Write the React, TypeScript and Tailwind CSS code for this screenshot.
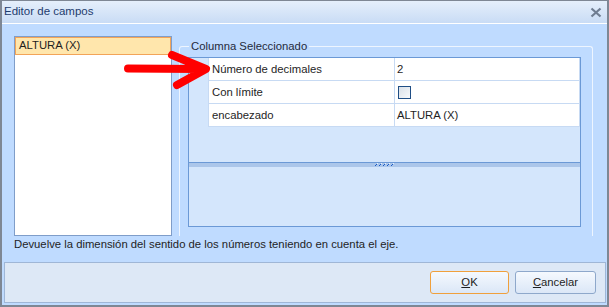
import React from "react";

const rows = [
  { name: "Número de decimales", value: "2" },
  { name: "Con límite", value: null },
  { name: "encabezado", value: "ALTURA (X)" },
];

const Button = ({ label, hot, focused }: { label: string; hot: number; focused?: boolean }) => (
  <button
    className={
      "flex h-[23px] items-center justify-center rounded-[3px] border bg-gradient-to-b from-[#f5f9fe] to-[#dbe7f7] text-[11.3px] text-[#1e1e1e] " +
      (focused ? "w-[79px] border-[#f0a03c]" : "w-[81px] border-[#8ea8cb]")
    }
  >
    {label.slice(0, hot)}
    <span className="underline">{label[hot]}</span>
    {label.slice(hot + 1)}
  </button>
);

export default function App() {
  return (
    <div className="relative flex h-[307px] w-[609px] flex-col border-x-2 border-t border-b-2 border-[#7e8794] bg-[#bfdbff] font-['Liberation_Sans',sans-serif] text-[11.3px] text-[#1e1e1e]">
      {/* title bar */}
      <div className="flex h-[23px] items-center justify-between border-b border-white bg-gradient-to-b from-[#e5effb] to-[#c9dcf5] pl-[2px] pr-[5px]">
        <span className="text-[11.5px] text-[#1e3c6e]">Editor de campos</span>
        <svg width="12" height="11" viewBox="0 0 12 11">
          <path d="M1.5 1.5 L10.5 9.5 M10.5 1.5 L1.5 9.5" stroke="#6f7d91" strokeWidth="2.2" />
        </svg>
      </div>

      {/* main row */}
      <div className="flex h-[212px] pl-[12px] pt-[12px]">
        <div className="h-[200px] w-[158px] border border-[#7f9dc9] bg-white">
          <div className="flex h-[18px] items-center border border-[#f2a458] bg-[#ffe6ac] pl-[3px] leading-none">
            ALTURA (X)
          </div>
        </div>

        <div className="relative ml-[7px] mt-[10px] h-[190px] w-[414px] rounded-t-[3px] border-x border-t border-[#eef5ff]">
          <span className="absolute -top-[9px] left-[9px] bg-[#bfdbff] px-[2px] leading-[16px] text-[#1f2a3c]">
            Columna Seleccionado
          </span>

          <div className="ml-[8px] mt-[10px] flex h-[170px] w-[393px] flex-col border border-[#6b99d6] bg-[#d4e6fc]">
            <div className="h-[104px] pl-[19px]">
              {rows.map((r) => (
                <div key={r.name} className="flex h-[23px] border-x border-b border-[#c7daf3] bg-white">
                  <div className="flex w-[186px] items-center border-r border-[#c7daf3] pl-[3px]">{r.name}</div>
                  <div className="flex flex-1 items-center pl-[2px]">
                    {r.value === null ? (
                      <span className="ml-[1px] h-[13px] w-[13px] border border-[#1f4e85] bg-gradient-to-br from-[#d9e0e8] to-[#f7f9fb]" />
                    ) : (
                      r.value
                    )}
                  </div>
                </div>
              ))}
            </div>
            <div className="flex h-[5px] justify-center border-t border-[#6b99d6] bg-[#abc6ea]">
              <svg width="19" height="4" viewBox="0 0 19 4">
                {[0, 4, 8, 12, 16].map((x) => (
                  <g key={x}>
                    <rect x={x} y={2} width="1" height="1" fill="#1a5cc8" />
                    <rect x={x + 1} y={1} width="1" height="1" fill="#1a5cc8" />
                    <rect x={x + 2} y={0} width="1" height="1" fill="#e8f2ff" />
                  </g>
                ))}
              </svg>
            </div>
            <div className="flex-1" />
          </div>
        </div>
      </div>

      {/* description */}
      <div className="h-[26px] pl-[12px] leading-[16px]">
        Devuelve la dimensión del sentido de los números teniendo en cuenta el eje.
      </div>

      {/* button panel */}
      <div className="ml-[2px] flex h-[41px] w-[602px] justify-end gap-[6px] border border-[#9fb6d6] bg-[#dde8f6] pr-[9px] pt-[8px]">
        <Button label="OK" hot={0} focused />
        <Button label="Cancelar" hot={0} />
      </div>

      {/* red annotation arrow */}
      <svg className="pointer-events-none absolute left-0 top-0" width="609" height="307" viewBox="0 0 609 307">
        <path
          d="M126 67.5 L197 68 M170 54 L204 68 L175 84"
          fill="none"
          stroke="#ff0000"
          strokeWidth="8"
          strokeLinecap="round"
          strokeLinejoin="round"
        />
      </svg>
    </div>
  );
}
